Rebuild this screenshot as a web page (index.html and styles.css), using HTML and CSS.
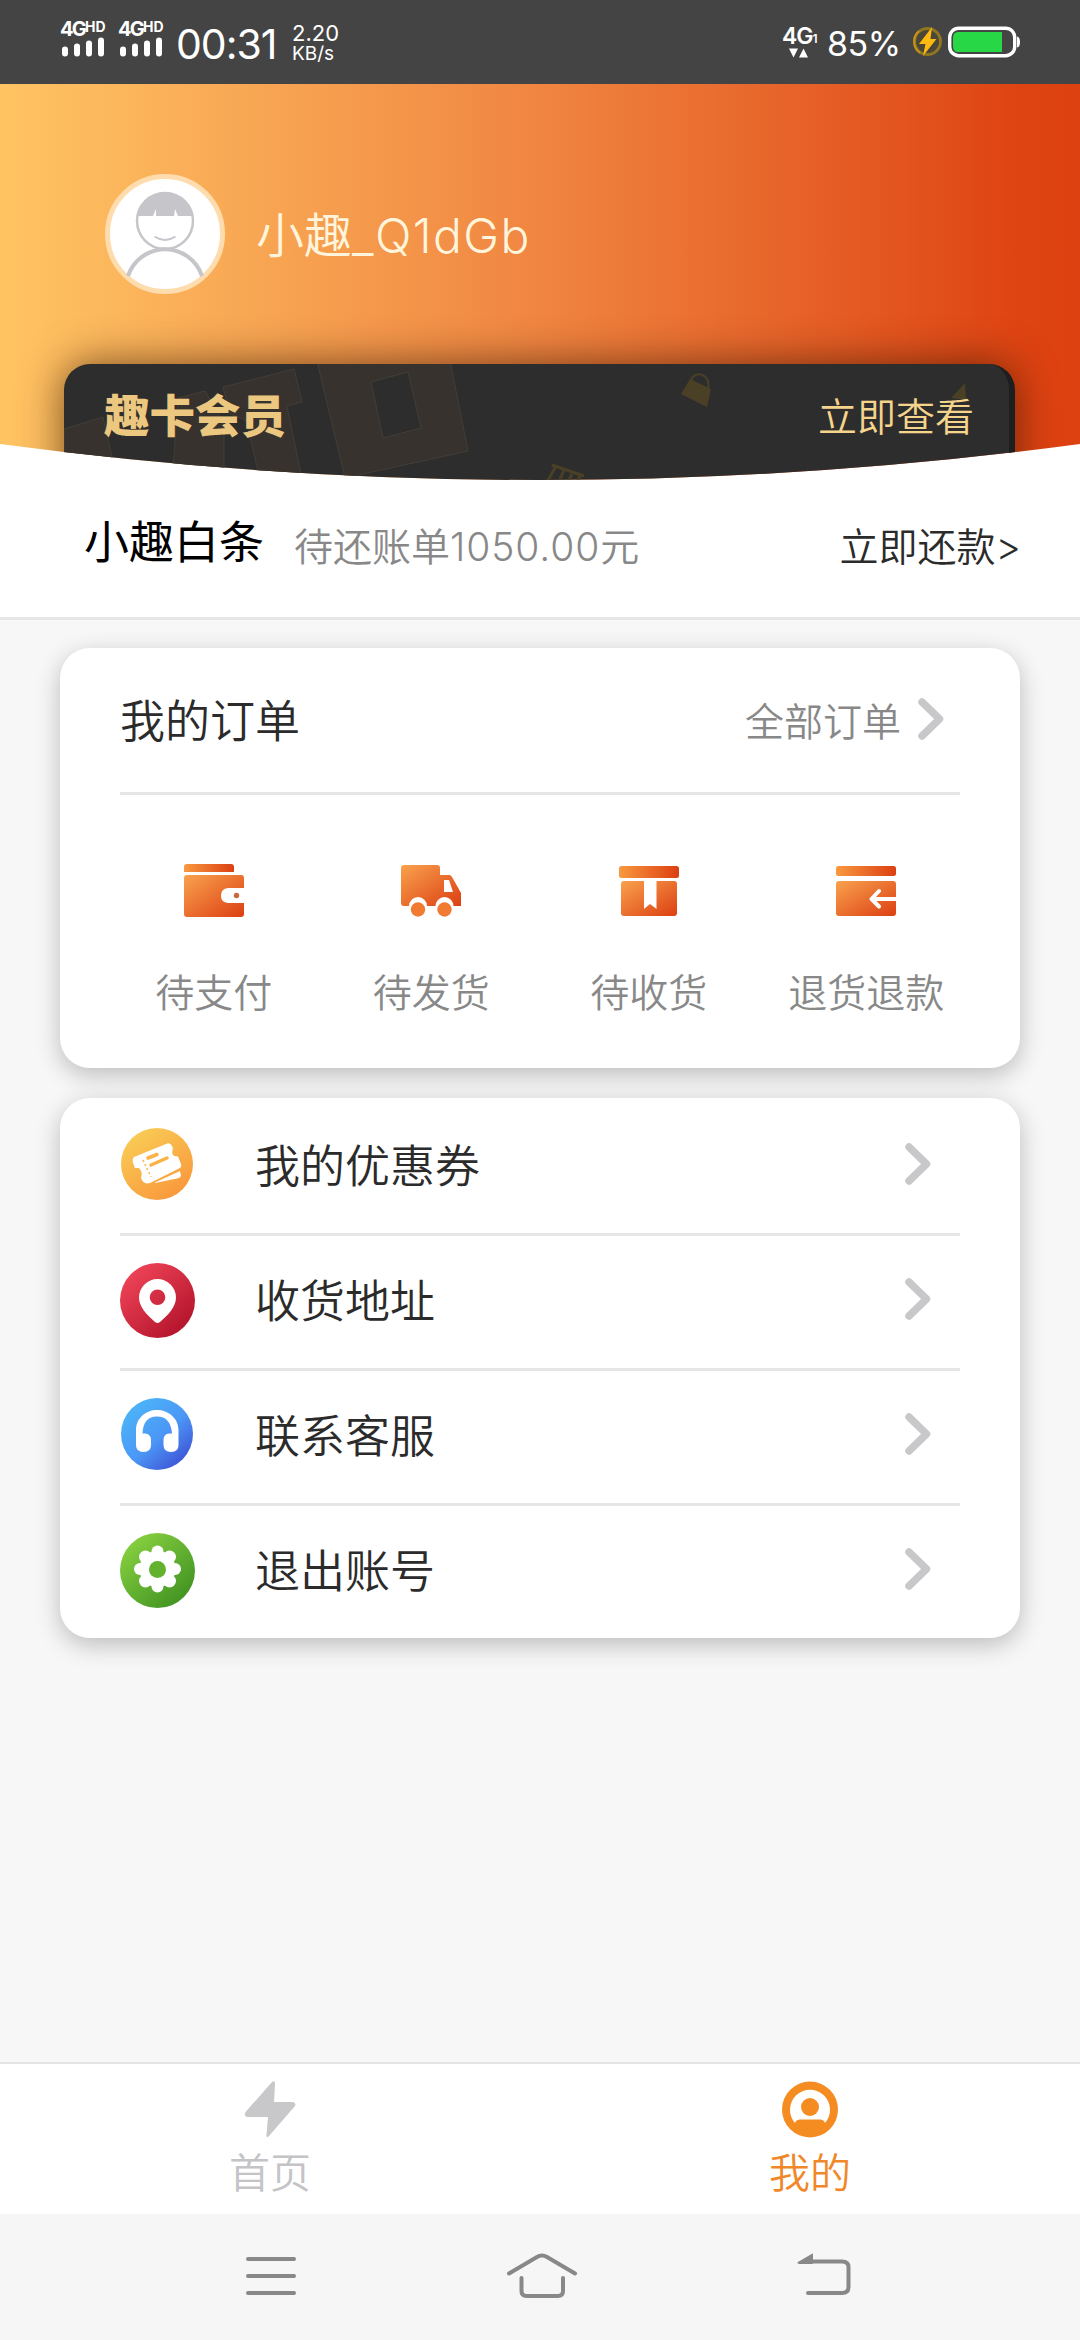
FILE: index.html
```html
<!DOCTYPE html>
<html lang="zh-CN">
<head>
<meta charset="utf-8">
<title>我的</title>
<link rel="stylesheet" href="styles.css">
</head>
<body>
<svg class="defs" width="0" height="0" aria-hidden="true">
  <defs>
    <linearGradient id="org" x1="0" y1="0" x2="1" y2="1"><stop offset="0" stop-color="#f9a24d"/><stop offset="1" stop-color="#dc3f12"/></linearGradient>
    <linearGradient id="orgFlat" x1="0" y1="0" x2="1" y2="0"><stop offset="0" stop-color="#f9993f"/><stop offset="1" stop-color="#dc3f12"/></linearGradient>
    <linearGradient id="gold" x1="0.15" y1="0" x2="0.85" y2="1"><stop offset="0" stop-color="#f9cf57"/><stop offset="1" stop-color="#f9943a"/></linearGradient>
    <linearGradient id="red" x1="0.15" y1="0.1" x2="0.85" y2="0.9"><stop offset="0" stop-color="#ee4357"/><stop offset="1" stop-color="#b3142c"/></linearGradient>
    <linearGradient id="blue" x1="0.15" y1="0.1" x2="0.85" y2="0.9"><stop offset="0" stop-color="#4cb4f8"/><stop offset="0.55" stop-color="#4b97f6"/><stop offset="1" stop-color="#3f55d6"/></linearGradient>
    <linearGradient id="green" x1="0.15" y1="0.1" x2="0.85" y2="0.9"><stop offset="0" stop-color="#86cf40"/><stop offset="1" stop-color="#429322"/></linearGradient>
    <symbol id="signal" viewBox="0 0 46 20"><path d="M5 12.500V16.500M17 9.500V16.500M29 6.500V16.500M41 3.500V16.500" stroke="#fff" stroke-width="6" stroke-linecap="round"/></symbol>
    <symbol id="chevron" viewBox="0 0 26 42"><path d="M4 4L21.500 21L4 38" fill="none" stroke="#c8c8cb" stroke-width="7.500" stroke-linecap="round" stroke-linejoin="round"/></symbol>
  </defs>
</svg>

<header class="status">
  <div class="sim"><div class="sim-label">4G<span class="hd">HD</span></div><svg class="bars"><use href="#signal"/></svg></div>
  <div class="sim"><div class="sim-label">4G<span class="hd">HD</span></div><svg class="bars"><use href="#signal"/></svg></div>
  <div class="clock">00:31</div>
  <div class="speed"><span class="speed-value">2.20</span><span class="speed-unit">KB/s</span></div>
  <div class="status-right">
    <div class="data"><div class="data-label">4G<span class="one">1</span></div><svg width="20" height="10" viewBox="0 0 20 10"><path d="M0 0.500H9L4.500 9.500ZM10 9.500H19L14.500 0.500Z" fill="#fff"/></svg></div>
    <div class="percent">85%</div>
    <svg class="charge" width="31" height="31" viewBox="0 0 31 31"><circle cx="15.500" cy="15.500" r="13" fill="#4b4637" stroke="#8f7620" stroke-width="3"/><path d="M7 5A14 14 0 0 0 8 27" fill="none" stroke="#c79216" stroke-width="2"/><path d="M20 1L7 18H13.500L11 30L24.500 13H18.500Z" fill="#fdbb12"/></svg>
    <svg class="battery" width="73" height="32" viewBox="0 0 73 32"><rect x="1.700" y="2.200" width="65" height="27.500" rx="9" fill="none" stroke="#fff" stroke-width="3.400"/><path d="M10 6H54V26H10Q5 26 5 20V12Q5 6 10 6Z" fill="#28d745"/><path d="M69 10.500Q72 11 72 16T69 21.500Z" fill="#fff"/></svg>
  </div>
</header>

<div class="hero-wrap">
<section class="hero">
  <div class="profile">
    <svg class="avatar" width="120" height="120" viewBox="0 0 120 120">
      <circle cx="60" cy="60" r="57.500" fill="#fff" stroke="#ffdcae" stroke-width="5"/>
      <g fill="none" stroke="#c5c5ca">
        <circle cx="60" cy="47" r="28" stroke-width="2.500"/>
        <path d="M23 102A39 39 0 0 1 97 102" stroke-width="4"/>
        <path d="M49.500 62.500Q60 69.500 70.500 62.500" stroke-width="1.800"/>
      </g>
      <path d="M32 42A28.500 28.500 0 0 1 88 42H73L70 35L69 42H51V35L48 42Z" fill="#c5c5ca"/>
    </svg>
    <div class="nickname">小趣<span class="latin">_Q1dGb</span></div>
  </div>
  <div class="member">
    <svg class="pattern" width="945" height="120" viewBox="0 0 945 120" aria-hidden="true">
      <g fill="#37322e" stroke="#433e37" stroke-width="1">
        <path d="M0 65L39 53L54 120H0Z"/>
        <path d="M114 34L141 27L160 60V120H108Z"/>
        <path d="M159 23L230 5L238 38L223 42L239 120H197L182 56L166 50Z"/>
        <path fill-rule="evenodd" d="M253 -3H386L404 87L281 114ZM307 18L344 8L357 64L319 74Z"/>
      </g>
      <g fill="#494026">
        <path d="M626 15L647 25L643 43L617 30Z"/>
        <path d="M627 17C630 5 648 10 644 25" fill="none" stroke="#494026" stroke-width="2"/>
        <path d="M887 34L901 19L902 36Z"/>
        <path d="M488 101L520 112M492 102L482 120M500 106L494 120M508 110L503 120M516 112L512 120" fill="none" stroke="#494026" stroke-width="3"/>
      </g>
    </svg>
    <span class="member-title">趣卡会员</span>
    <span class="member-link">立即查看</span>
  </div>
</section>
</div>

<section class="credit">
  <span class="credit-title">小趣白条</span>
  <span class="credit-bill">待还账单<span class="amount">1050.00</span>元</span>
  <span class="credit-pay">立即还款&gt;</span>
</section>

<main class="content">
  <section class="card">
    <div class="orders-head">
      <span class="label">我的订单</span>
      <span class="all">全部订单</span>
      <svg class="chevron"><use href="#chevron"/></svg>
    </div>
    <div class="orders">
      <div class="order">
        <svg width="60" height="54" viewBox="0 0 60 54"><path d="M3 0H47Q50 0 50 3V8H0V3Q0 0 3 0Z" fill="url(#orgFlat)"/><path d="M3 11H57Q60 11 60 14V24H44Q37 24.500 37 31.500T44 39H60V50Q60 53 57 53H3Q0 53 0 50V14Q0 11 3 11Z" fill="url(#org)"/><circle cx="52.500" cy="31.500" r="2.700" fill="#c86a3d"/></svg>
        <span>待支付</span>
      </div>
      <div class="order">
        <svg width="60" height="54" viewBox="0 0 60 54"><path fill-rule="evenodd" d="M3 1H36Q39 1 39 4V11H48Q50 11 51 13L60 29V42H52.500A9 9 0 0 0 34.500 42H26A9 9 0 0 0 8 42H3Q0 42 0 39V4Q0 1 3 1ZM43 16V28H52L48 16Z" fill="url(#org)"/><circle cx="17" cy="45.500" r="7.200" fill="#f17b33"/><circle cx="43.500" cy="45.500" r="7.200" fill="#f17b33"/></svg>
        <span>待发货</span>
      </div>
      <div class="order">
        <svg width="60" height="54" viewBox="0 0 60 54"><rect y="2" width="60" height="12" rx="2.500" fill="url(#orgFlat)"/><path d="M5 17H25V45L31 40L37.500 45V17H55Q58 17 58 20V49Q58 52 55 52H5Q2 52 2 49V20Q2 17 5 17Z" fill="url(#org)"/></svg>
        <span>待收货</span>
      </div>
      <div class="order">
        <svg width="60" height="54" viewBox="0 0 60 54"><rect y="2" width="60" height="10" rx="2.500" fill="url(#orgFlat)"/><rect y="17" width="60" height="35" rx="3" fill="url(#org)"/><path d="M60 35H36M43 27L35.500 35L43 42.500" fill="none" stroke="#fff" stroke-width="4" stroke-linecap="round" stroke-linejoin="round"/></svg>
        <span>退货退款</span>
      </div>
    </div>
  </section>

  <section class="card menu">
    <div class="row">
      <svg class="badge" viewBox="0 0 75 75"><circle cx="37" cy="36" r="36" fill="url(#gold)"/><path d="M35 54.500L60 43L61 48Q60 50 57 50.500L35 55Z" fill="#fff"/><path d="M14 29L46 16Q50 14 52 18L53 20Q51 25 54 28L58 28.500L61 36Q62 39 59 40.500L31 54.500Q25 57 22.500 53L21 50Q23 44 19 40L15 40L13 35Q12 31 14 29Z" fill="#fff"/><path d="M28 30L37 26.500M31 37L47 30" stroke="#fbb347" stroke-width="3.500" stroke-linecap="round"/><path d="M23 32L31 49" stroke="#fbb347" stroke-width="1.500" stroke-dasharray="2 2.500"/></svg>
      <span class="label">我的优惠券</span>
      <svg class="chevron"><use href="#chevron"/></svg>
    </div>
    <div class="row">
      <svg class="badge" viewBox="0 0 75 75"><circle cx="37.500" cy="37.500" r="37.500" fill="url(#red)"/><path fill-rule="evenodd" d="M37.500 16A18.500 18.500 0 0 1 56 34.500C56 44 48 52 40 59Q37.500 61 35 59C27 52 19 44 19 34.500A18.500 18.500 0 0 1 37.500 16ZM37.500 26.500A7.800 7.800 0 1 0 37.500 42.100A7.800 7.800 0 1 0 37.500 26.500Z" fill="#fff"/></svg>
      <span class="label">收货地址</span>
      <svg class="chevron"><use href="#chevron"/></svg>
    </div>
    <div class="row">
      <svg class="badge" viewBox="0 0 75 75"><circle cx="37" cy="36" r="36" fill="url(#blue)"/><path d="M16 47V32C16 20 26 12 37 12S58.500 20 58.500 32V47Q58.500 54 51 54T43.500 47V42Q43.500 36 49 35.500H52C51 24 46 18.500 37 18.500S23 24 22.500 35.500H25Q31 36 31 42V47Q31 54 23.500 54T16 47Z" fill="#fff"/></svg>
      <span class="label">联系客服</span>
      <svg class="chevron"><use href="#chevron"/></svg>
    </div>
    <div class="row">
      <svg class="badge" viewBox="0 0 75 75"><circle cx="37.500" cy="37.500" r="37.500" fill="url(#green)"/><g fill="#fff"><circle cx="37.500" cy="36" r="18"/><circle cx="37.500" cy="18.500" r="6"/><circle cx="37.500" cy="53.500" r="6"/><circle cx="20" cy="36" r="6"/><circle cx="55" cy="36" r="6"/><circle cx="25.500" cy="24" r="6.500"/><circle cx="49.500" cy="24" r="6.500"/><circle cx="25.500" cy="48" r="6.500"/><circle cx="49.500" cy="48" r="6.500"/></g><circle cx="37.500" cy="36.500" r="8.500" fill="#62b22f"/></svg>
      <span class="label">退出账号</span>
      <svg class="chevron"><use href="#chevron"/></svg>
    </div>
  </section>
</main>

<nav class="tabs">
  <div class="tab">
    <svg width="56" height="57" viewBox="0 0 56 57"><path d="M30 1Q33 -1 33 3L32 21H51Q54.500 22 53 25L27 55Q24 58 24.500 53L26 36H5Q1.500 35 3.500 31Z" fill="#c8c8cb"/></svg>
    <span>首页</span>
  </div>
  <div class="tab active">
    <svg width="56" height="57" viewBox="0 0 56 57"><circle cx="28" cy="28.500" r="28" fill="#f58c21"/><path d="M13 42A20 20 0 1 1 43 42Q42 38.500 38 38.500H18Q14 38.500 13 42Z" fill="#fff"/><circle cx="28" cy="26" r="9" fill="#f58c21"/></svg>
    <span>我的</span>
  </div>
</nav>

<footer class="sysnav">
  <svg width="72" height="46" viewBox="0 0 72 46"><path d="M13 6H59M13 23H59M13 40H59"/></svg>
  <svg class="home" width="72" height="46" viewBox="0 0 72 46"><path d="M3 20.500L31 4Q36 1 41 4L69 20.500M15.500 25V38Q15.500 43 20.500 43H52Q57 43 57 38V25"/></svg>
  <svg width="72" height="46" viewBox="0 0 72 46"><path d="M16 8.500H53Q59.500 8.500 59.500 14V34Q59.500 40 53 40H19"/><path class="tip" d="M9 9.500L23.500 1V10.500H10Z"/></svg>
</footer>
</body>
</html>
```

FILE: styles.css
```css
* { box-sizing: border-box; }

body {
  margin: 0;
  width: 1080px;
  height: 2340px;
  display: flex;
  flex-direction: column;
  background: #f7f7f7;
  color: #2b2b2b;
  font-family: Inter, "Noto Sans CJK SC", sans-serif;
  font-weight: 350;
  white-space: nowrap;
  overflow: hidden;
}

svg { display: block; flex: none; }
.defs { position: absolute; }

/* system status bar */
.status {
  flex: none;
  height: 84px;
  padding: 0 59px 0 60px;
  display: flex;
  align-items: flex-start;
  background: #444;
  color: #fff;
  font-weight: 400;
}
.sim { width: 46px; margin: 18px 12px 0 0; }
.sim-label {
  display: flex;
  height: 19px;
  font-size: 20px;
  line-height: 23px;
  font-weight: 700;
  letter-spacing: -1.8px;
}
.hd { font-size: 14px; line-height: 17px; letter-spacing: 0; }
.bars { width: 46px; height: 20px; }
.clock { width: 116px; font-size: 41px; line-height: 50px; margin-top: 19px; letter-spacing: -1px; }
.speed { display: flex; flex-direction: column; margin-top: 22px; }
.speed-value { font-size: 22px; line-height: 22px; }
.speed-unit { font-size: 19px; line-height: 19px; }
.status-right { display: flex; margin-left: auto; }
.data { width: 45px; padding-top: 23px; }
.data-label { display: flex; align-items: flex-end; height: 25px; font-size: 23px; line-height: 24px; font-weight: 600; letter-spacing: -1px; }
.data svg { margin-left: 7px; }
.one { font-size: 12px; line-height: 18px; }
.percent { width: 85px; font-size: 34px; line-height: 40px; margin-top: 24px; letter-spacing: -.5px; }
.charge { margin-top: 26px; }
.battery { margin: 26px 0 0 5px; }

/* profile header */
.hero-wrap { flex: none; background: #fff; }
.hero {
  height: 396px;
  background: linear-gradient(90deg, #ffc463 0%, #f08541 50%, #de4312 95%, #de4111 100%);
  clip-path: path("M0 0H1080V360Q540 432 0 360Z");
}
.profile {
  height: 280px;
  padding: 90px 0 0 105px;
  display: flex;
  gap: 31px;
}
.nickname { font-size: 48px; line-height: 124px; color: #fff5dc; }
.latin { letter-spacing: 1.4px; }
.member {
  position: relative;
  width: 951px;
  height: 160px;
  margin-left: 64px;
  padding: 0 35px 0 40px;
  display: flex;
  justify-content: space-between;
  border-radius: 26px;
  border-right: 6px solid #1c1f1d;
  background: #2d2d2d;
  box-shadow: 0 0 42px rgba(50, 20, 0, .65);
}
.pattern { position: absolute; left: 0; top: 0; }
.member-title, .member-link { position: relative; height: 104px; line-height: 106px; }
.member-title { font-size: 45.5px; font-weight: 900; color: #ebc77f; }
.member-link { font-size: 39px; color: #f5d48c; }

/* credit line */
.credit {
  flex: none;
  height: 140px;
  padding: 0 59px 0 84px;
  display: flex;
  align-items: flex-start;
  background: #fff;
  border-bottom: 3px solid #e6e6e6;
  line-height: 133px;
  font-size: 39px;
}
.credit-title { font-size: 45px; font-weight: 400; line-height: 125px; color: #000; }
.credit-bill { margin-left: 30px; color: #888; }
.amount { font-weight: 300; letter-spacing: .9px; }
.credit-pay { margin-left: auto; }

/* cards */
.content {
  flex: 1;
  padding: 28px 60px 0;
  display: flex;
  flex-direction: column;
  gap: 30px;
}
.card {
  border-radius: 30px;
  background: #fff;
  box-shadow: 0 7px 24px rgba(0, 0, 0, .24);
}
.orders-head {
  height: 147px;
  margin: 0 60px;
  padding-right: 16px;
  display: flex;
  align-items: center;
  border-bottom: 3px solid #e6e6e6;
  font-size: 45px;
}
.label { margin-bottom: 4px; }
.all { margin: 0 17px 3px auto; font-size: 39px; color: #888; }
.chevron { width: 26px; height: 42px; }
.orders-head .chevron { margin-top: -3px; }
.orders {
  height: 273px;
  margin: 0 45px;
  padding-top: 69px;
  display: grid;
  grid-template-columns: repeat(4, 1fr);
}
.order {
  display: flex;
  flex-direction: column;
  align-items: center;
  gap: 46px;
  font-size: 39px;
  line-height: 58px;
  color: #888;
}
.menu { padding: 0 60px; }
.row {
  height: 135px;
  padding-right: 29px;
  display: flex;
  align-items: center;
  font-size: 45px;
}
.row + .row { border-top: 3px solid #e6e6e6; padding-bottom: 3px; }
.badge { width: 75px; height: 75px; margin-right: 60px; }
.row .chevron { margin: -4px 0 0 auto; }

/* tab bar */
.tabs {
  flex: none;
  height: 152px;
  display: flex;
  background: #fff;
  border-top: 2px solid #e4e4e4;
}
.tab {
  flex: 1;
  padding-top: 17px;
  display: flex;
  flex-direction: column;
  align-items: center;
  gap: 7px;
  font-size: 41px;
  line-height: 56px;
  color: #c4c4c7;
}
.active { color: #f0882a; }

/* system navigation */
.sysnav {
  flex: none;
  height: 126px;
  padding: 39px 219px 0 235px;
  display: flex;
  justify-content: space-between;
  background: #f6f6f6;
}
.home { margin-left: -13px; }
.sysnav path { fill: none; stroke: #888; stroke-width: 4; stroke-linecap: round; stroke-linejoin: round; }
.sysnav .tip { fill: #888; stroke-width: 1; }
```
